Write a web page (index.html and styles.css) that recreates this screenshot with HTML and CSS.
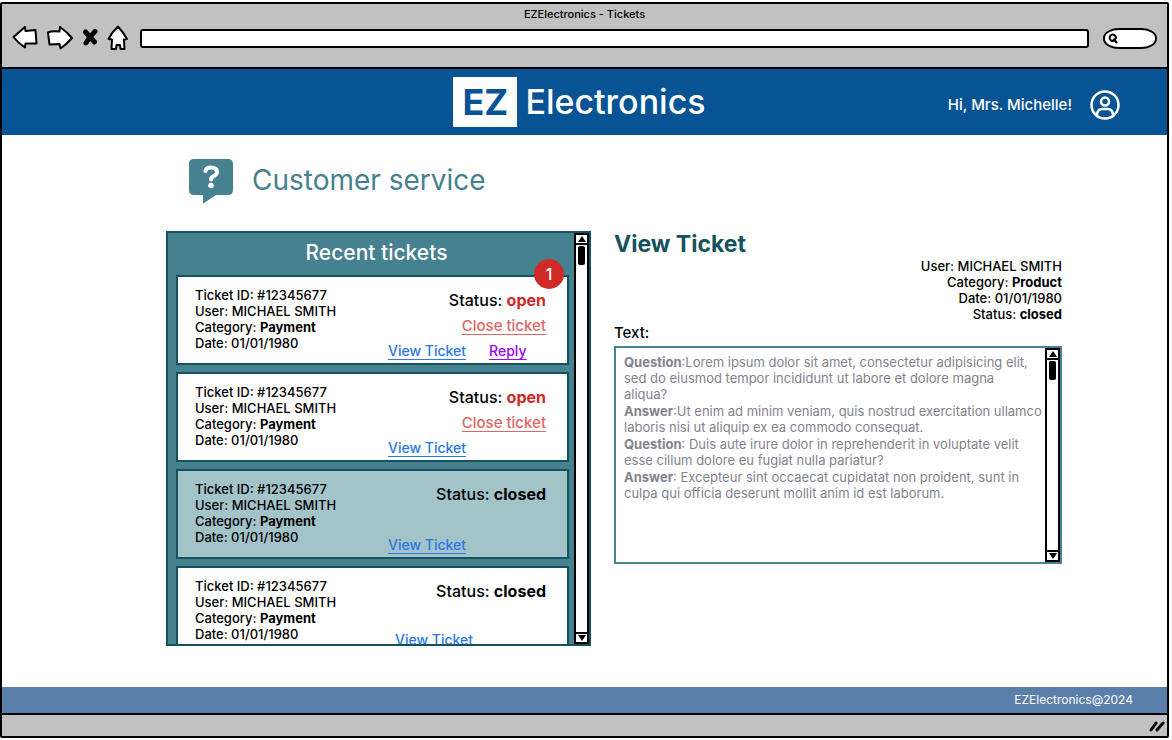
FILE: index.html
```html
<!DOCTYPE html>
<html lang="en">
<head>
<meta charset="utf-8">
<meta name="viewport" content="width=device-width, initial-scale=1">
<title>EZElectronics - Tickets</title>
<link rel="stylesheet" href="styles.css">
</head>
<body>
<div class="window">
  <div class="browser-bar">
    <div class="window-title">EZElectronics - Tickets</div>
    <div class="tools">
      <button class="tool" type="button" aria-label="Back"><svg width="26" height="24" viewBox="0 0 26 24"><path d="M1.500 11 L13 1 L13.500 5 L23.500 4 L24.500 17.500 L13.500 17.500 L13 21.500 Q6 17 1.500 11 Z"/></svg></button>
      <button class="tool" type="button" aria-label="Forward"><svg width="26" height="24" viewBox="0 0 26 24"><path d="M1 6.500 Q5 4.500 12.500 5.500 L13 1 Q20 6 25 12 Q20 18 13.500 22.500 L12.500 18 L2.500 18.500 Z"/></svg></button>
      <button class="tool" type="button" aria-label="Stop"><svg width="16" height="20" viewBox="0 0 16 20"><path class="stop" d="M3.500 4 L12.500 14 M13 3.500 Q7 9 4 15"/></svg></button>
      <button class="tool" type="button" aria-label="Home"><svg width="22" height="26" viewBox="0 0 22 26"><path d="M11 1.500 Q16 7 20 14 L17 14.500 L17.500 24 L13.500 24 L13 20 L9.500 20 L9 24 L4.500 24 L5 14.500 L1.500 14 Q5 7 11 1.500 Z"/></svg></button>
      <input class="address" type="text" aria-label="Address">
      <label class="search">
        <svg width="10" height="11" viewBox="0 0 10 11"><path d="M7.500 6.500 A3.200 3.200 0 1 1 8 4.500 Q8 6 5 7 M6.500 7 L9 10"/></svg>
        <input class="search-input" type="text" aria-label="Search">
      </label>
    </div>
  </div>

  <header class="site-header">
    <div class="logo"><span class="logo-mark">EZ</span><span>Electronics</span></div>
    <div class="account">
      <span>Hi, Mrs. Michelle!</span>
      <svg width="30" height="30" viewBox="0 0 30 30"><circle cx="15" cy="15" r="13.500"/><circle cx="15" cy="11.500" r="4"/><path d="M7 25 V24 Q8 19 12 19 H18 Q22 19 23 24 V25"/></svg>
    </div>
  </header>

  <main class="content">
    <div class="page-title">
      <svg width="44" height="45" viewBox="0 0 44 45"><path class="bubble" d="M5 0 H39 Q44 0 44 5 V31 Q44 36 39 36 H27 L15 44 Q14 45 14 43 V36 H5 Q0 36 0 31 V5 Q0 0 5 0 Z"/><path class="mark" d="M16.500 12 Q17 8.500 22 8.500 Q28 8.500 28 13 Q28 15 25 17 Q22 18.500 22 20.500"/><circle class="dot" cx="22" cy="26.500" r="2.800"/></svg>
      <h1>Customer service</h1>
    </div>

    <div class="columns">
      <section class="recent">
        <div class="recent-body">
          <h2>Recent tickets</h2>
          <div class="cards">
            <article class="card">
              <p class="info">Ticket ID: #12345677<br>User: MICHAEL SMITH<br>Category: <b>Payment</b><br>Date: 01/01/1980</p>
              <div class="side">
                <p class="status">Status: <b class="open">open</b></p>
                <a class="close" href="#close">Close ticket</a>
                <div class="links"><a href="#view">View Ticket</a><a class="reply" href="#reply">Reply</a></div>
              </div>
              <span class="badge">1</span>
            </article>
            <article class="card">
              <p class="info">Ticket ID: #12345677<br>User: MICHAEL SMITH<br>Category: <b>Payment</b><br>Date: 01/01/1980</p>
              <div class="side">
                <p class="status">Status: <b class="open">open</b></p>
                <a class="close" href="#close">Close ticket</a>
                <div class="links"><a href="#view">View Ticket</a></div>
              </div>
            </article>
            <article class="card selected">
              <p class="info">Ticket ID: #12345677<br>User: MICHAEL SMITH<br>Category: <b>Payment</b><br>Date: 01/01/1980</p>
              <div class="side">
                <p class="status">Status: <b>closed</b></p>
                <div class="links"><a href="#view">View Ticket</a></div>
              </div>
            </article>
            <article class="card last">
              <p class="info">Ticket ID: #12345677<br>User: MICHAEL SMITH<br>Category: <b>Payment</b><br>Date: 01/01/1980</p>
              <div class="side">
                <p class="status">Status: <b>closed</b></p>
                <div class="links"><a href="#view">View Ticket</a></div>
              </div>
            </article>
          </div>
        </div>
        <div class="scrollbar">
          <button type="button" aria-label="Scroll up"><svg width="8" height="6" viewBox="0 0 8 6"><path d="M4 0 L8 6 H0 Z"/></svg></button>
          <div class="thumb"></div>
          <button type="button" aria-label="Scroll down"><svg width="8" height="6" viewBox="0 0 8 6"><path d="M0 0 H8 L4 6 Z"/></svg></button>
        </div>
      </section>

      <section class="detail">
        <h2>View Ticket</h2>
        <p class="meta">User: MICHAEL SMITH<br>Category: <b>Product</b><br>Date: 01/01/1980<br>Status: <b>closed</b></p>
        <h3>Text:</h3>
        <div class="message">
          <div class="message-text">
            <p><b>Question</b>:Lorem ipsum dolor sit amet, consectetur adipisicing elit,<br>sed do eiusmod tempor incididunt ut labore et dolore magna<br>aliqua?</p>
            <p><b>Answer</b>:Ut enim ad minim veniam, quis nostrud exercitation ullamco<br>laboris nisi ut aliquip ex ea commodo consequat.</p>
            <p><b>Question</b>: Duis aute irure dolor in reprehenderit in voluptate velit<br>esse cillum dolore eu fugiat nulla pariatur?</p>
            <p><b>Answer</b>: Excepteur sint occaecat cupidatat non proident, sunt in<br>culpa qui officia deserunt mollit anim id est laborum.</p>
          </div>
          <div class="scrollbar">
            <button type="button" aria-label="Scroll up"><svg width="8" height="6" viewBox="0 0 8 6"><path d="M4 0 L8 6 H0 Z"/></svg></button>
            <div class="thumb"></div>
            <button type="button" aria-label="Scroll down"><svg width="8" height="6" viewBox="0 0 8 6"><path d="M0 0 H8 L4 6 Z"/></svg></button>
          </div>
        </div>
      </section>
    </div>
  </main>

  <footer class="site-footer">EZElectronics@2024</footer>
  <div class="status-bar"><svg width="16" height="12" viewBox="0 0 16 12"><path d="M2 10 L7 3 M8 10 L14 3"/></svg></div>
</div>
</body>
</html>
```
FILE: styles.css
```css
* { box-sizing: border-box; }

body {
  margin: 0;
  padding: 2px 3px 2px 0;
  background: #fff;
  color: #000;
  font-family: Inter, "Liberation Sans", sans-serif;
  font-size: 13px;
  line-height: 16px;
}

h1, h2, h3, p { margin: 0; font-weight: 400; }
button { padding: 0; border: 0; background: none; }

.window {
  display: flex;
  flex-direction: column;
  min-height: calc(100vh - 4px);
  border: 2px solid #000;
  border-radius: 2px;
}

/* Browser chrome */
.browser-bar {
  background: #c1c1c1;
  border-bottom: 2px solid #000;
  padding: 2px 10px 0 10px;
  height: 65px;
}
.window-title { text-align: center; font-size: 11px; font-weight: 500; }
.tools { display: flex; align-items: center; height: 32px; }
.tool { display: flex; margin-right: 9px; }
.tool svg {
  fill: #fff;
  stroke: #000;
  stroke-width: 2;
  stroke-linejoin: round;
}
.tool .stop { stroke-width: 5; stroke-linecap: round; fill: none; }
.address {
  flex: 1;
  min-width: 0;
  height: 19px;
  margin-left: 2px;
  padding: 0 4px;
  border: 2px solid #000;
  border-radius: 3px;
  background: #fff;
}
.search {
  display: flex;
  align-items: center;
  width: 54px;
  height: 21px;
  margin-left: 14px;
  padding-left: 3px;
  border: 2px solid #000;
  border-radius: 16px / 10px;
  background: #fff;
}
.search svg { flex: none; fill: none; stroke: #000; stroke-width: 2; }
.search-input { width: 32px; height: 14px; padding: 0; border: 0; background: none; }

/* Site header */
.site-header {
  display: grid;
  grid-template-columns: 1fr auto 1fr;
  align-items: center;
  height: 66px;
  padding: 0 47px 0 37px;
  background: #085394;
  color: #fff;
}
.logo {
  grid-column: 2;
  display: flex;
  align-items: center;
  gap: 8px;
  font-size: 34px;
  font-weight: 500;
  line-height: 50px;
}
.logo-mark {
  width: 64px;
  background: #fff;
  color: #085394;
  font-weight: 700;
  font-size: 36px;
  text-align: center;
}
.account {
  display: flex;
  align-items: center;
  justify-content: flex-end;
  gap: 18px;
  padding-top: 6px;
  font-size: 15px;
  font-weight: 500;
}
.account svg { fill: none; stroke: #fff; stroke-width: 2.5; }

/* Main content */
.content { flex: 1; padding: 24px 105px 24px 164px; }
.page-title {
  display: flex;
  align-items: flex-start;
  gap: 19px;
  padding-left: 23px;
  margin-bottom: 27px;
  color: #46818f;
}
.page-title h1 { font-size: 28px; line-height: 42px; }
.bubble { fill: #46818f; }
.mark { fill: none; stroke: #fff; stroke-width: 4; stroke-linecap: round; }
.dot { fill: #fff; }

.columns {
  display: grid;
  grid-template-columns: 425fr 448fr;
  gap: 23px;
  align-items: start;
}

/* Recent tickets */
.recent {
  display: flex;
  height: 415px;
  border: 2px solid #14525f;
  background: #46818f;
}
.recent-body {
  flex: 1;
  min-width: 0;
  padding: 0 5px 0 8px;
  overflow: hidden;
}
.recent h2 {
  color: #fff;
  font-size: 21px;
  font-weight: 500;
  line-height: 40px;
  padding: 0 0 2px 8px;
  text-align: center;
}
.cards { display: grid; gap: 7px; }
.card {
  position: relative;
  display: flex;
  justify-content: space-between;
  border: 2px solid #14525f;
  background: #fff;
  padding: 10px 21px 0 17px;
}
.card.selected { background: #a2c3c8; }
.info { font-weight: 500; white-space: nowrap; }
.side {
  display: flex;
  flex-direction: column;
  align-items: flex-end;
  width: 158px;
  height: 76px;
  line-height: 26px;
}
.status { font-size: 16px; font-weight: 500; white-space: nowrap; }
.open { color: #cf2a27; }
.close { font-size: 15px; font-weight: 500; color: #e06666; text-underline-offset: 3px; }
.links {
  display: flex;
  gap: 23px;
  width: 158px;
  margin-top: auto;
  font-size: 14px;
  font-weight: 500;
  line-height: 24px;
}
.links a { color: #2b78e4; text-underline-offset: 3px; }
.links .reply { color: #9900ff; }
.last .side { height: 74px; }
.last .links { padding-left: 7px; }
.badge {
  position: absolute;
  top: -18px;
  right: 3px;
  width: 30px;
  height: 30px;
  border-radius: 50%;
  background: #cf2a27;
  color: #fff;
  font-size: 16px;
  font-weight: 500;
  line-height: 30px;
  text-align: center;
}

.scrollbar {
  flex: none;
  display: flex;
  flex-direction: column;
  width: 15px;
  border: 2px solid #000;
  background: #fff;
}
.scrollbar button {
  display: flex;
  align-items: center;
  justify-content: center;
  height: 10px;
}
.scrollbar button:first-child { border-bottom: 2px solid #000; }
.scrollbar button:last-child { border-top: 2px solid #000; margin-top: auto; }
.thumb {
  width: 7px;
  height: 19px;
  margin: 1px auto 0;
  border-radius: 2px;
  background: #000;
}

/* Ticket detail */
.detail h2 {
  color: #14525f;
  font-size: 23px;
  font-weight: 700;
  line-height: 27px;
}
.meta { font-weight: 500; text-align: right; }
.detail h3 { font-size: 15px; font-weight: 500; line-height: 20px; margin: 1px 0 3px; }
.message {
  display: flex;
  min-height: 218px;
  border: 2px solid #46818f;
}
.message-text {
  flex: 1;
  display: flex;
  flex-direction: column;
  gap: 1px;
  min-width: 0;
  padding: 6px 0 6px 8px;
  color: #84828f;
  white-space: nowrap;
}

/* Footer */
.site-footer {
  background: #5a7fab;
  color: #fff;
  padding: 5px 34px 5px 16px;
  text-align: right;
  font-size: 12px;
}
.status-bar {
  display: flex;
  align-items: center;
  justify-content: flex-end;
  height: 23px;
  padding-right: 2px;
  border-top: 2px solid #000;
  background: #c1c1c1;
}
.status-bar svg { stroke: #000; stroke-width: 3; stroke-linecap: round; }
```
